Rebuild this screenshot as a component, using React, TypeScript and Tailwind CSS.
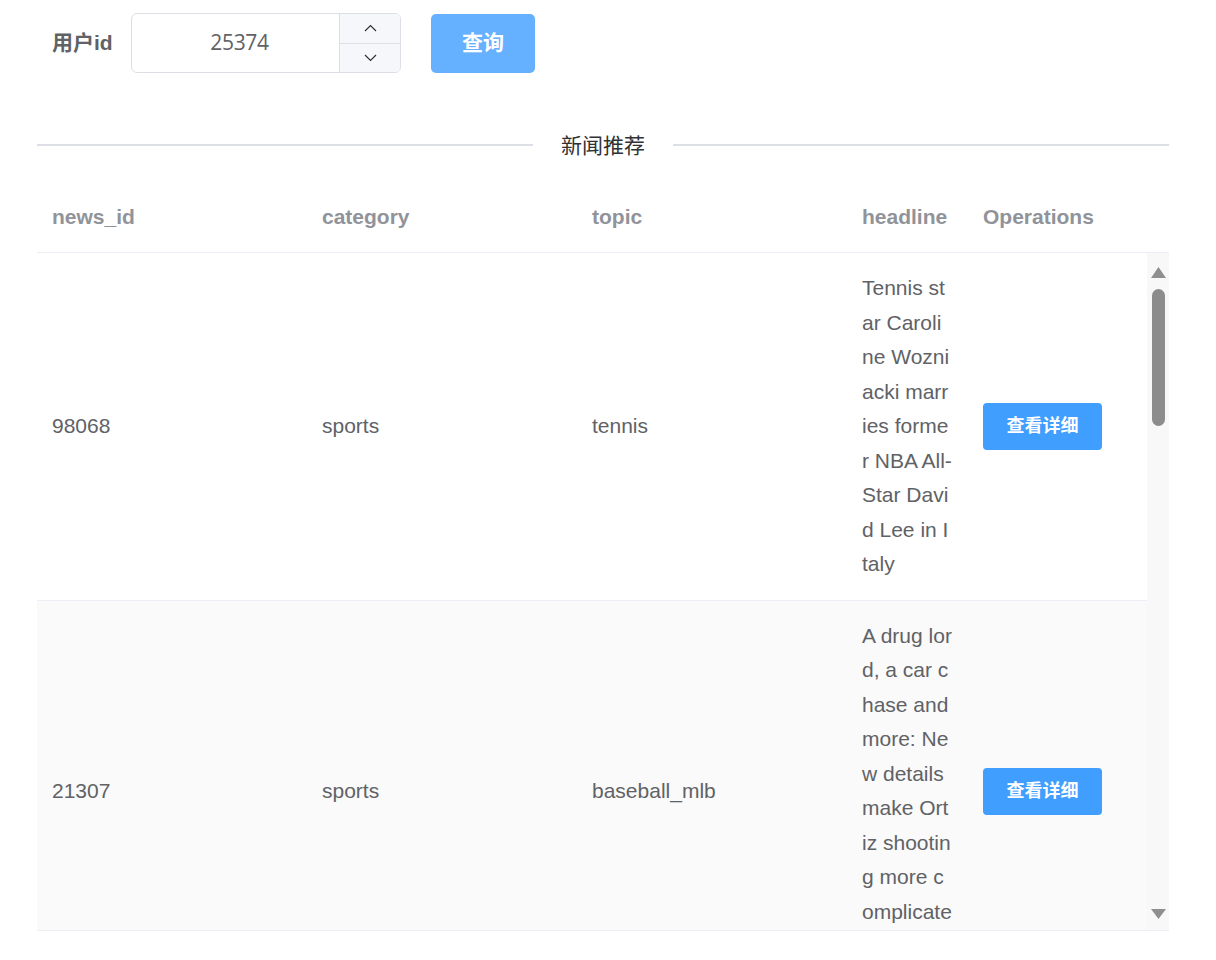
import { useState } from "react";

type NewsRow = {
  news_id: string;
  category: string;
  topic: string;
  headline: string[];
};

// headline lines are kept as they wrap in the narrow column
const rows: NewsRow[] = [
  {
    news_id: "98068",
    category: "sports",
    topic: "tennis",
    headline: [
      "Tennis st",
      "ar Caroli",
      "ne Wozni",
      "acki marr",
      "ies forme",
      "r NBA All-",
      "Star Davi",
      "d Lee in I",
      "taly",
    ],
  },
  {
    news_id: "21307",
    category: "sports",
    topic: "baseball_mlb",
    headline: [
      "A drug lor",
      "d, a car c",
      "hase and",
      "more: Ne",
      "w details",
      "make Ort",
      "iz shootin",
      "g more c",
      "omplicate",
      "d",
    ],
  },
];

function UserIdInput() {
  const [value, setValue] = useState(25374);

  return (
    <div className="flex h-[60px] w-[270px] overflow-hidden rounded-[6px] border border-[#dcdfe6] bg-white">
      <div className="flex flex-1 items-center justify-center pl-[8px] font-['Open_Sans','Noto_Sans',sans-serif] text-[21px] tracking-[-0.3px] text-[#606266]">
        {value}
      </div>
      <div className="flex w-[61px] flex-col border-l border-[#dcdfe6] bg-[#f5f7fa]">
        <button
          onClick={() => setValue(value + 1)}
          className="flex flex-1 items-center justify-center border-b border-[#dcdfe6]"
        >
          <svg width="13" height="8" viewBox="0 0 13 8">
            <polyline points="1,7 6.5,1.5 12,7" fill="none" stroke="#303133" strokeWidth="1.2" />
          </svg>
        </button>
        <button
          onClick={() => setValue(value - 1)}
          className="flex flex-1 items-center justify-center"
        >
          <svg width="13" height="8" viewBox="0 0 13 8">
            <polyline points="1,1 6.5,6.5 12,1" fill="none" stroke="#303133" strokeWidth="1.2" />
          </svg>
        </button>
      </div>
    </div>
  );
}

function ScrollTrack() {
  return (
    <div className="flex w-[22px] flex-col items-center bg-[#f8f8f8] pt-[14px] pb-[11px]">
      <svg width="15" height="11" viewBox="0 0 15 11">
        <polygon points="7.5,0 15,11 0,11" fill="#8f8f8f" />
      </svg>
      <div className="mt-[11px] h-[137px] w-[13px] rounded-full bg-[#8c8c8c]" />
      <div className="flex-1" />
      <svg width="15" height="10" viewBox="0 0 15 10">
        <polygon points="0,0 15,0 7.5,10" fill="#8f8f8f" />
      </svg>
    </div>
  );
}

export default function App() {
  return (
    <div className="min-h-screen bg-white pl-[37px] pt-[13px] font-['Liberation_Sans','Noto_Sans_CJK_SC',sans-serif]">
      <div className="w-[1132px]">
        <div className="flex items-center pl-[15px]">
          <div className="w-[79px] text-[21px] font-bold text-[#606266]">用户id</div>
          <UserIdInput />
          <button className="ml-[30px] h-[59px] w-[104px] rounded-[5px] bg-[#66b1ff] text-[21px] font-bold text-white">
            查询
          </button>
        </div>

        <div className="mt-[57px] flex h-[30px] items-center">
          <div className="h-[2px] flex-1 bg-[#dcdfe6]" />
          <span className="px-[28px] font-['Noto_Sans_CJK_SC',sans-serif] text-[21px] text-[#303133]">
            新闻推荐
          </span>
          <div className="h-[2px] flex-1 bg-[#dcdfe6]" />
        </div>

        <div className="mt-[22px] text-[21px] leading-[34.5px] text-[#606266]">
          <div className="flex h-[71px] items-center border-b border-[#ebeef5] font-bold text-[#909399]">
            <div className="w-[270px] pl-[15px]">news_id</div>
            <div className="w-[270px] pl-[15px]">category</div>
            <div className="w-[270px] pl-[15px]">topic</div>
            <div className="w-[121px] pl-[15px]">headline</div>
            <div className="flex-1 pl-[15px]">Operations</div>
          </div>

          <div className="flex h-[678px] border-b border-[#ebeef5]">
            <div className="flex-1 overflow-hidden">
              {rows.map((row, index) => (
                <div
                  key={row.news_id}
                  className={`flex items-center border-b border-[#ebeef5] py-[18px] ${index % 2 === 1 ? "bg-[#fafafa]" : "bg-white"}`}
                >
                  <div className="w-[270px] pl-[15px]">{row.news_id}</div>
                  <div className="w-[270px] pl-[15px]">{row.category}</div>
                  <div className="w-[270px] pl-[15px]">{row.topic}</div>
                  <div className="w-[121px] pl-[15px]">
                    {row.headline.map((line, i) => (
                      <span key={i} className="block whitespace-nowrap">
                        {line}
                      </span>
                    ))}
                  </div>
                  <div className="flex-1 pl-[15px]">
                    <button className="h-[47px] w-[119px] rounded-[4px] bg-[#409eff] text-[18px] font-bold leading-none text-white">
                      查看详细
                    </button>
                  </div>
                </div>
              ))}
            </div>
            <ScrollTrack />
          </div>
        </div>
      </div>
    </div>
  );
}
